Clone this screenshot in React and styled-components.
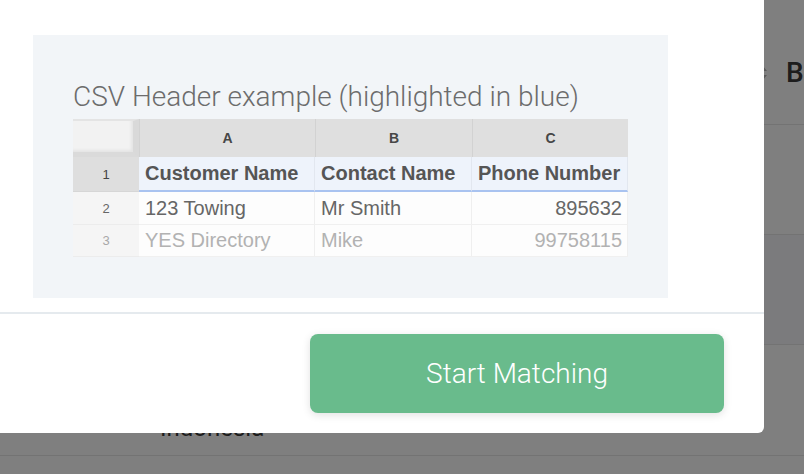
import React from 'react'
import styled, { createGlobalStyle } from 'styled-components'

const GlobalStyle = createGlobalStyle`
  html, body {
    margin: 0;
    padding: 0;
  }
  body {
    font-family: Roboto, "Liberation Sans", sans-serif;
    background: #fff;
    overflow: hidden;
  }
`

/* page behind the dialog */
const Page = styled.div`
  width: 804px;
  height: 474px;
  overflow: hidden;
`

const BgRow = styled.div`
  display: grid;
  grid-template-columns: 160px 612px 1fr;
  height: ${p => p.$height}px;
  border-bottom: 1px solid #e6e6e6;
  background: ${p => (p.$shade ? '#f6f7fa' : '#fff')};
  color: #3a3a3a;
`

const HeadCell = styled.div`
  display: flex;
  align-items: flex-start;
  justify-content: ${p => (p.$end ? 'flex-end' : 'flex-start')};
  padding: 56px ${p => (p.$end ? '4px' : '0')} 0 ${p => (p.$end ? '0' : '14px')};
  font-size: 28px;
  line-height: 34px;
  font-weight: 500;
`

const SortIcon = styled.svg`
  margin-top: 9px;
`

const BodyCell = styled.div`
  padding-top: 44px;
  font-size: 24px;
  line-height: 26px;
`

/* dialog */
const Overlay = styled.div`
  position: fixed;
  inset: 0;
  background: rgba(0, 0, 0, 0.5);
`

const Modal = styled.div`
  position: fixed;
  top: -20px;
  left: -20px;
  width: 784px;
  background: #fff;
  border-radius: 6px;
`

const ModalBody = styled.div`
  padding: 55px 96px 14px 53px;
  border-bottom: 2px solid #e5eaee;
`

const Panel = styled.div`
  background: #f2f5f8;
  padding: 47px 40px 41px 40px;
`

const Title = styled.h3`
  margin: 0 0 7px;
  font-size: 28px;
  line-height: 30px;
  font-weight: 300;
  color: #6c6c6c;
  white-space: nowrap;
`

const Sheet = styled.div`
  display: grid;
  grid-template-columns: 66px 176px 157px 156px;
  grid-template-rows: 38px 35px 33px 32px;
  font-family: "Liberation Sans", Arial, sans-serif;
`

const Corner = styled.div`
  background: #f2f2f2;
  border-top: 2px solid #e4e4e4;
  border-right: 6px solid #d9d9d9;
  border-bottom: 5px solid #dadada;
  box-shadow: inset -2px -2px 3px rgba(0, 0, 0, 0.06);
`

const ColHead = styled.div`
  display: flex;
  align-items: center;
  justify-content: center;
  background: #dfdfdf;
  border-left: 1px solid #d2d2d2;
  font-size: 14px;
  font-weight: bold;
  color: #474747;
`

const RowNum = styled.div`
  display: flex;
  align-items: center;
  justify-content: center;
  font-size: 13px;
  background: ${p => (p.$row === 1 ? '#dedede' : '#f5f5f5')};
  color: ${p => ({ 1: '#444', 2: '#666', 3: '#a8a8a8' }[p.$row])};
  border-bottom: 1px solid ${p => (p.$row === 1 ? '#d6d6d6' : '#ececec')};
`

const Cell = styled.div`
  display: flex;
  align-items: center;
  justify-content: ${p => (p.$right ? 'flex-end' : 'flex-start')};
  padding: 0 5px 0 6px;
  font-size: 20px;
  white-space: nowrap;
  font-weight: ${p => (p.$row === 1 ? 'bold' : 'normal')};
  color: ${p => ({ 1: '#555', 2: '#666', 3: '#b2b2b2' }[p.$row])};
  background: ${p => (p.$row === 1 ? '#eef3fb' : '#fdfdfd')};
  border-right: 1px solid ${p => (p.$row === 1 ? '#e2e7ef' : '#efefef')};
  border-bottom: ${p => (p.$row === 1 ? '2px solid #a9c3f0' : '1px solid #f0f0f0')};
`

const Footer = styled.div`
  display: flex;
  justify-content: flex-end;
  padding: 20px 40px;
`

const Button = styled.button`
  width: 414px;
  height: 79px;
  border: none;
  border-radius: 8px;
  background: #69bb8c;
  color: #fff;
  font-family: Roboto, "Liberation Sans", sans-serif;
  font-size: 28px;
  font-weight: 300;
  box-shadow: 0 2px 8px rgba(0, 0, 0, 0.12);
  cursor: pointer;
`

const rows = [
  ['Customer Name', 'Contact Name', 'Phone Number'],
  ['123 Towing', 'Mr Smith', '895632'],
  ['YES Directory', 'Mike', '99758115'],
]

const App = () => {
  return (
    <>
      <GlobalStyle />
      <Page>
        <BgRow $height={124}>
          <div />
          <HeadCell $end>
            <SortIcon width="10" height="16" viewBox="0 0 10 16">
              <path d="M5 1 L9 6 H1 Z M5 15 L9 10 H1 Z" fill="#b5b5b5" />
            </SortIcon>
          </HeadCell>
          <HeadCell>B</HeadCell>
        </BgRow>
        <BgRow $height={109}>
          <div />
          <BodyCell />
          <div />
        </BgRow>
        <BgRow $height={109} $shade>
          <div />
          <BodyCell />
          <div />
        </BgRow>
        <BgRow $height={110}>
          <div />
          <BodyCell>
            Melbourne
            <br />
            Indonesia
          </BodyCell>
          <div />
        </BgRow>
      </Page>

      <Overlay />
      <Modal>
        <ModalBody>
          <Panel>
            <Title>CSV Header example (highlighted in blue)</Title>
            <Sheet>
              <Corner />
              <ColHead>A</ColHead>
              <ColHead>B</ColHead>
              <ColHead>C</ColHead>
              {rows.map((r, i) => (
                <React.Fragment key={i}>
                  <RowNum $row={i + 1}>{i + 1}</RowNum>
                  <Cell $row={i + 1}>{r[0]}</Cell>
                  <Cell $row={i + 1}>{r[1]}</Cell>
                  <Cell $row={i + 1} $right={i > 0}>{r[2]}</Cell>
                </React.Fragment>
              ))}
            </Sheet>
          </Panel>
        </ModalBody>
        <Footer>
          <Button>Start Matching</Button>
        </Footer>
      </Modal>
    </>
  )
}

export default App
